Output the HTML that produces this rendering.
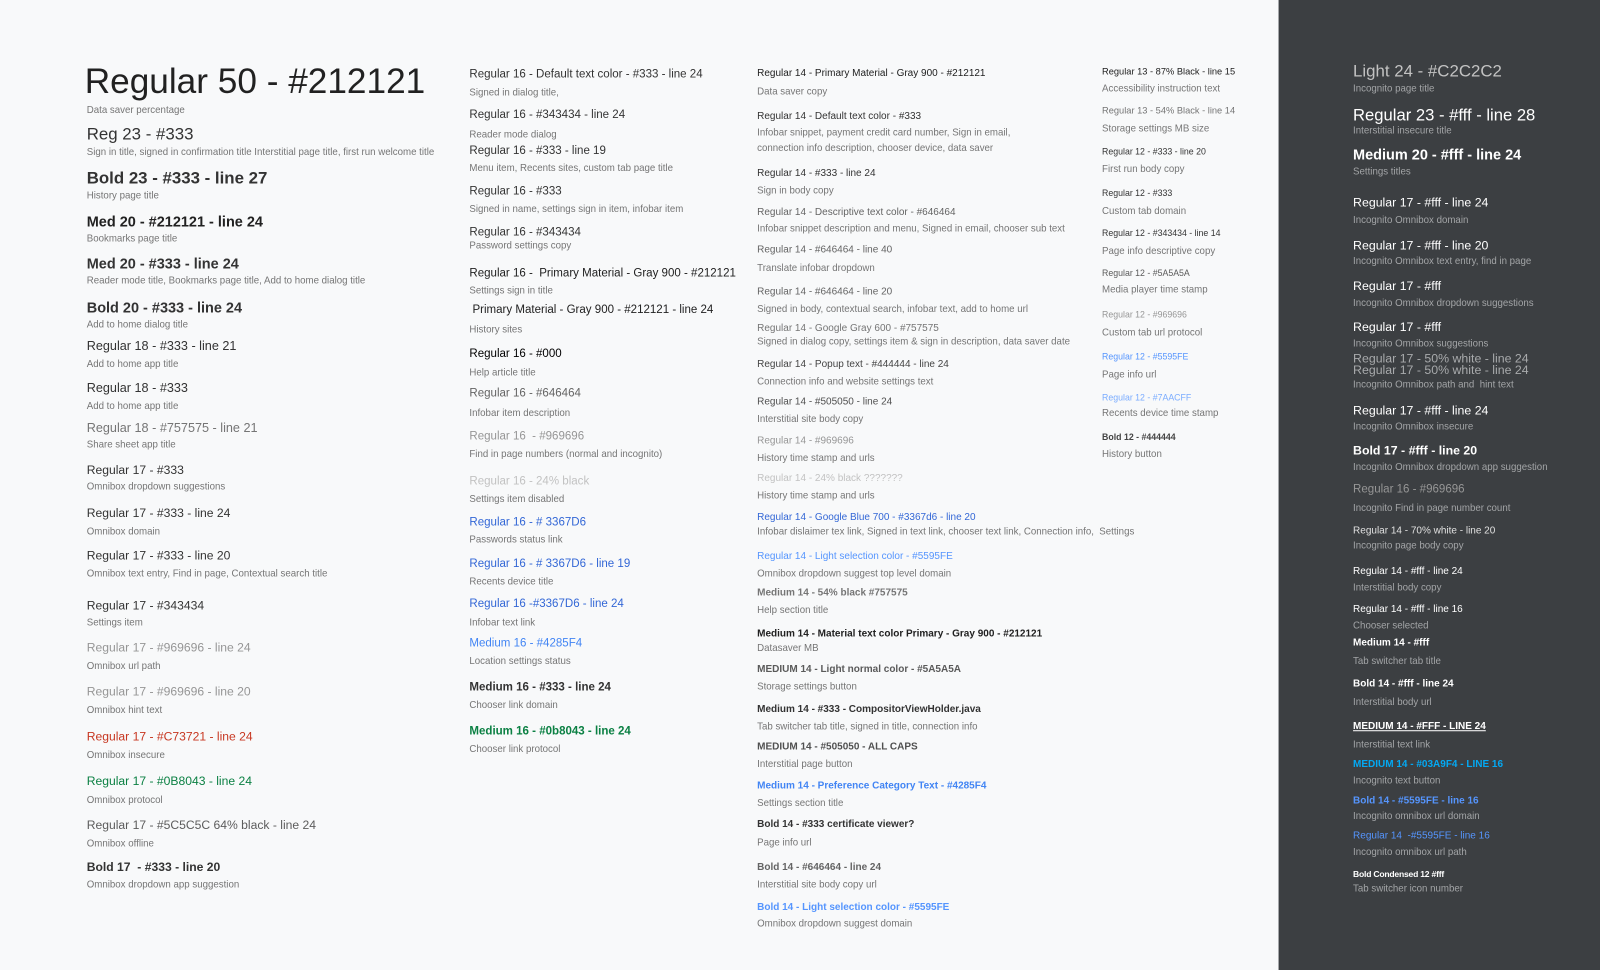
<!DOCTYPE html>
<html><head><meta charset="utf-8">
<style>
html,body{margin:0;padding:0}
body{width:1600px;height:970px;position:relative;overflow:hidden;background:#f8f9fa;font-family:"Liberation Sans",Arial,sans-serif}
#w{position:absolute;left:0;top:0;width:1568px;height:951px;transform:scale(1.0204);transform-origin:0 0}
.t{position:absolute;line-height:1;white-space:nowrap;transform:translateY(-55%);color:#333}
.c{font-size:9.5px;color:#757575}
.b{font-weight:bold}
#dark{position:absolute;left:1253px;top:0;width:340px;height:951px;background:#3c3f42}
.d{color:#fff}
.dc{font-size:9.5px;color:#a3a5a7}
.s16{font-size:11.3px}.s14{font-size:9.8px}.s13{font-size:9.1px}.s12{font-size:8.6px}.s17{font-size:11.9px}.s18{font-size:12.4px}.s20{font-size:14.2px}.s23{font-size:16.5px}
</style></head><body>
<div id="w">
<div id="dark"></div>

<!-- Column 1 -->
<div class="t" style="left:83px;top:82px;font-size:34.5px;color:#212121">Regular 50 - #212121</div>
<div class="t c" style="left:85px;top:109px">Data saver percentage</div>
<div class="t s23" style="left:85px;top:133px">Reg 23 - #333</div>
<div class="t c" style="left:85px;top:150px">Sign in title, signed in confirmation title Interstitial page title, first run welcome title</div>
<div class="t s23 b" style="left:85px;top:176px">Bold 23 - #333 - line 27</div>
<div class="t c" style="left:85px;top:193px">History page title</div>
<div class="t s20 b" style="left:85px;top:219px;color:#212121">Med 20 - #212121 - line 24</div>
<div class="t c" style="left:85px;top:235px">Bookmarks page title</div>
<div class="t s20 b" style="left:85px;top:260px">Med 20 - #333 - line 24</div>
<div class="t c" style="left:85px;top:276px">Reader mode title, Bookmarks page title, Add to home dialog title</div>
<div class="t s20 b" style="left:85px;top:303px">Bold 20 - #333 - line 24</div>
<div class="t c" style="left:85px;top:319px">Add to home dialog title</div>
<div class="t s18" style="left:85px;top:340px">Regular 18 - #333 - line 21</div>
<div class="t c" style="left:85px;top:358px">Add to home app title</div>
<div class="t s18" style="left:85px;top:381px">Regular 18 - #333</div>
<div class="t c" style="left:85px;top:399px">Add to home app title</div>
<div class="t s18" style="left:85px;top:420px;color:#757575">Regular 18 - #757575 - line 21</div>
<div class="t c" style="left:85px;top:437px">Share sheet app title</div>
<div class="t s17" style="left:85px;top:462px">Regular 17 - #333</div>
<div class="t c" style="left:85px;top:478px">Omnibox dropdown suggestions</div>
<div class="t s17" style="left:85px;top:504px">Regular 17 - #333 - line 24</div>
<div class="t c" style="left:85px;top:522px">Omnibox domain</div>
<div class="t s17" style="left:85px;top:546px">Regular 17 - #333 - line 20</div>
<div class="t c" style="left:85px;top:563px">Omnibox text entry, Find in page, Contextual search title</div>
<div class="t s17" style="left:85px;top:595px;color:#343434">Regular 17 - #343434</div>
<div class="t c" style="left:85px;top:611px">Settings item</div>
<div class="t s17" style="left:85px;top:636px;color:#969696">Regular 17 - #969696 - line 24</div>
<div class="t c" style="left:85px;top:654px">Omnibox url path</div>
<div class="t s17" style="left:85px;top:679px;color:#969696">Regular 17 - #969696 - line 20</div>
<div class="t c" style="left:85px;top:697px">Omnibox hint text</div>
<div class="t s17" style="left:85px;top:723px;color:#c73721">Regular 17 - #C73721 - line 24</div>
<div class="t c" style="left:85px;top:741px">Omnibox insecure</div>
<div class="t s17" style="left:85px;top:767px;color:#0b8043">Regular 17 - #0B8043 - line 24</div>
<div class="t c" style="left:85px;top:785px">Omnibox protocol</div>
<div class="t s17" style="left:85px;top:810px;color:#5c5c5c">Regular 17 - #5C5C5C 64% black - line 24</div>
<div class="t c" style="left:85px;top:828px">Omnibox offline</div>
<div class="t s17 b" style="left:85px;top:851px">Bold 17&nbsp; - #333 - line 20</div>
<div class="t c" style="left:85px;top:868px">Omnibox dropdown app suggestion</div>

<!-- Column 2 -->
<div class="t s16" style="left:460px;top:74px">Regular 16 - Default text color - #333 - line 24</div>
<div class="t c" style="left:460px;top:92px">Signed in dialog title,</div>
<div class="t s16" style="left:460px;top:114px;color:#343434">Regular 16 - #343434 - line 24</div>
<div class="t c" style="left:460px;top:133px">Reader mode dialog</div>
<div class="t s16" style="left:460px;top:149px">Regular 16 - #333 - line 19</div>
<div class="t c" style="left:460px;top:166px">Menu item, Recents sites, custom tab page title</div>
<div class="t s16" style="left:460px;top:189px">Regular 16 - #333</div>
<div class="t c" style="left:460px;top:206px">Signed in name, settings sign in item, infobar item</div>
<div class="t s16" style="left:460px;top:229px;color:#343434">Regular 16 - #343434</div>
<div class="t c" style="left:460px;top:242px">Password settings copy</div>
<div class="t s16" style="left:460px;top:269px;color:#212121">Regular 16 -&nbsp; Primary Material - Gray 900 - #212121</div>
<div class="t c" style="left:460px;top:286px">Settings sign in title</div>
<div class="t s16" style="left:463px;top:305px;color:#212121">Primary Material - Gray 900 - #212121 - line 24</div>
<div class="t c" style="left:460px;top:324px">History sites</div>
<div class="t s16" style="left:460px;top:348px;color:#000">Regular 16 - #000</div>
<div class="t c" style="left:460px;top:366px">Help article title</div>
<div class="t s16" style="left:460px;top:387px;color:#646464">Regular 16 - #646464</div>
<div class="t c" style="left:460px;top:406px">Infobar item description</div>
<div class="t s16" style="left:460px;top:429px;color:#969696">Regular 16&nbsp; - #969696</div>
<div class="t c" style="left:460px;top:446px">Find in page numbers (normal and incognito)</div>
<div class="t s16" style="left:460px;top:473px;color:#c2c2c2">Regular 16 - 24% black</div>
<div class="t c" style="left:460px;top:490px">Settings item disabled</div>
<div class="t s16" style="left:460px;top:513px;color:#3367d6">Regular 16 - # 3367D6</div>
<div class="t c" style="left:460px;top:530px">Passwords status link</div>
<div class="t s16" style="left:460px;top:554px;color:#3367d6">Regular 16 - # 3367D6 - line 19</div>
<div class="t c" style="left:460px;top:571px">Recents device title</div>
<div class="t s16" style="left:460px;top:593px;color:#3367d6">Regular 16 -#3367D6 - line 24</div>
<div class="t c" style="left:460px;top:611px">Infobar text link</div>
<div class="t s16" style="left:460px;top:632px;color:#4285f4">Medium 16 - #4285F4</div>
<div class="t c" style="left:460px;top:649px">Location settings status</div>
<div class="t s16 b" style="left:460px;top:675px">Medium 16 - #333 - line 24</div>
<div class="t c" style="left:460px;top:692px">Chooser link domain</div>
<div class="t s16 b" style="left:460px;top:718px;color:#0b8043">Medium 16 - #0b8043 - line 24</div>
<div class="t c" style="left:460px;top:735px">Chooser link protocol</div>

<!-- Column 3 -->
<div class="t s14" style="left:742px;top:73px;color:#212121">Regular 14 - Primary Material - Gray 900 - #212121</div>
<div class="t c" style="left:742px;top:91px">Data saver copy</div>
<div class="t s14" style="left:742px;top:115px">Regular 14 - Default text color - #333</div>
<div class="t c" style="left:742px;top:131px">Infobar snippet, payment credit card number, Sign in email,</div>
<div class="t c" style="left:742px;top:146px">connection info description, chooser device, data saver</div>
<div class="t s14" style="left:742px;top:171px">Regular 14 - #333 - line 24</div>
<div class="t c" style="left:742px;top:188px">Sign in body copy</div>
<div class="t s14" style="left:742px;top:209px;color:#646464">Regular 14 - Descriptive text color - #646464</div>
<div class="t c" style="left:742px;top:225px">Infobar snippet description and menu, Signed in email, chooser sub text</div>
<div class="t s14" style="left:742px;top:246px;color:#646464">Regular 14 - #646464 - line 40</div>
<div class="t c" style="left:742px;top:264px">Translate infobar dropdown</div>
<div class="t s14" style="left:742px;top:287px;color:#646464">Regular 14 - #646464 - line 20</div>
<div class="t c" style="left:742px;top:304px">Signed in body, contextual search, infobar text, add to home url</div>
<div class="t s14" style="left:742px;top:323px;color:#757575">Regular 14 - Google Gray 600 - #757575</div>
<div class="t c" style="left:742px;top:336px">Signed in dialog copy, settings item &amp; sign in description, data saver date</div>
<div class="t s14" style="left:742px;top:358px;color:#444">Regular 14 - Popup text - #444444 - line 24</div>
<div class="t c" style="left:742px;top:375px">Connection info and website settings text</div>
<div class="t s14" style="left:742px;top:395px;color:#505050">Regular 14 - #505050 - line 24</div>
<div class="t c" style="left:742px;top:412px">Interstitial site body copy</div>
<div class="t s14" style="left:742px;top:433px;color:#969696">Regular 14 - #969696</div>
<div class="t c" style="left:742px;top:450px">History time stamp and urls</div>
<div class="t s14" style="left:742px;top:470px;color:#c2c2c2">Regular 14 - 24% black ???????</div>
<div class="t c" style="left:742px;top:487px">History time stamp and urls</div>
<div class="t s14" style="left:742px;top:508px;color:#3367d6">Regular 14 - Google Blue 700 - #3367d6 - line 20</div>
<div class="t c" style="left:742px;top:522px">Infobar dislaimer tex link, Signed in text link, chooser text link, Connection info,&nbsp; Settings</div>
<div class="t s14" style="left:742px;top:546px;color:#5595fe">Regular 14 - Light selection color - #5595FE</div>
<div class="t c" style="left:742px;top:563px">Omnibox dropdown suggest top level domain</div>
<div class="t s14 b" style="left:742px;top:582px;color:#757575">Medium 14 - 54% black #757575</div>
<div class="t c" style="left:742px;top:599px">Help section title</div>
<div class="t s14 b" style="left:742px;top:622px;color:#212121">Medium 14 - Material text color Primary - Gray 900 - #212121</div>
<div class="t c" style="left:742px;top:636px">Datasaver MB</div>
<div class="t s14 b" style="left:742px;top:657px;color:#5a5a5a">MEDIUM 14 - Light normal color - #5A5A5A</div>
<div class="t c" style="left:742px;top:674px">Storage settings button</div>
<div class="t s14 b" style="left:742px;top:696px">Medium 14 - #333 - CompositorViewHolder.java</div>
<div class="t c" style="left:742px;top:713px">Tab switcher tab title, signed in title, connection info</div>
<div class="t s14 b" style="left:742px;top:733px;color:#505050">MEDIUM 14 - #505050 - ALL CAPS</div>
<div class="t c" style="left:742px;top:750px">Interstitial page button</div>
<div class="t s14 b" style="left:742px;top:771px;color:#4285f4">Medium 14 - Preference Category Text - #4285F4</div>
<div class="t c" style="left:742px;top:788px">Settings section title</div>
<div class="t s14 b" style="left:742px;top:809px">Bold 14 - #333 certificate viewer?</div>
<div class="t c" style="left:742px;top:827px">Page info url</div>
<div class="t s14 b" style="left:742px;top:851px;color:#646464">Bold 14 - #646464 - line 24</div>
<div class="t c" style="left:742px;top:868px">Interstitial site body copy url</div>
<div class="t s14 b" style="left:742px;top:890px;color:#5595fe">Bold 14 - Light selection color - #5595FE</div>
<div class="t c" style="left:742px;top:906px">Omnibox dropdown suggest domain</div>

<!-- Column 4 -->
<div class="t s13" style="left:1080px;top:71px;color:#212121">Regular 13 - 87% Black - line 15</div>
<div class="t c" style="left:1080px;top:88px">Accessibility instruction text</div>
<div class="t s13" style="left:1080px;top:109px;color:#757575">Regular 13 - 54% Black - line 14</div>
<div class="t c" style="left:1080px;top:127px">Storage settings MB size</div>
<div class="t s12" style="left:1080px;top:149px">Regular 12 - #333 - line 20</div>
<div class="t c" style="left:1080px;top:167px">First run body copy</div>
<div class="t s12" style="left:1080px;top:190px">Regular 12 - #333</div>
<div class="t c" style="left:1080px;top:208px">Custom tab domain</div>
<div class="t s12" style="left:1080px;top:229px;color:#343434">Regular 12 - #343434 - line 14</div>
<div class="t c" style="left:1080px;top:247px">Page info descriptive copy</div>
<div class="t s12" style="left:1080px;top:268px;color:#5a5a5a">Regular 12 - #5A5A5A</div>
<div class="t c" style="left:1080px;top:285px">Media player time stamp</div>
<div class="t s12" style="left:1080px;top:309px;color:#969696">Regular 12 - #969696</div>
<div class="t c" style="left:1080px;top:327px">Custom tab url protocol</div>
<div class="t s12" style="left:1080px;top:350px;color:#5595fe">Regular 12 - #5595FE</div>
<div class="t c" style="left:1080px;top:368px">Page info url</div>
<div class="t s12" style="left:1080px;top:390px;color:#7aacff">Regular 12 - #7AACFF</div>
<div class="t c" style="left:1080px;top:406px">Recents device time stamp</div>
<div class="t s12 b" style="left:1080px;top:429px;color:#444">Bold 12 - #444444</div>
<div class="t c" style="left:1080px;top:446px">History button</div>

<!-- Column 5 (dark) -->
<div class="t" style="left:1326px;top:71px;font-size:16.5px;color:#c2c2c2">Light 24 - #C2C2C2</div>
<div class="t dc" style="left:1326px;top:88px">Incognito page title</div>
<div class="t d" style="left:1326px;top:114px;font-size:16.3px">Regular 23 - #fff - line 28</div>
<div class="t dc" style="left:1326px;top:129px">Interstitial insecure title</div>
<div class="t d s20 b" style="left:1326px;top:153px">Medium 20 - #fff - line 24</div>
<div class="t dc" style="left:1326px;top:169px">Settings titles</div>
<div class="t d s17" style="left:1326px;top:199px;font-size:12.1px">Regular 17 - #fff - line 24</div>
<div class="t dc" style="left:1326px;top:217px">Incognito Omnibox domain</div>
<div class="t d s17" style="left:1326px;top:241px;font-size:12.1px">Regular 17 - #fff - line 20</div>
<div class="t dc" style="left:1326px;top:257px">Incognito Omnibox text entry, find in page</div>
<div class="t d s17" style="left:1326px;top:281px;font-size:12.1px">Regular 17 - #fff</div>
<div class="t dc" style="left:1326px;top:298px">Incognito Omnibox dropdown suggestions</div>
<div class="t d s17" style="left:1326px;top:321px;font-size:12.1px">Regular 17 - #fff</div>
<div class="t dc" style="left:1326px;top:338px">Incognito Omnibox suggestions</div>
<div class="t" style="left:1326px;top:352px;font-size:12.1px;color:#a8aaac">Regular 17 - 50% white - line 24</div>
<div class="t" style="left:1326px;top:363px;font-size:12.1px;color:#a8aaac">Regular 17 - 50% white - line 24</div>
<div class="t dc" style="left:1326px;top:378px">Incognito Omnibox path and&nbsp; hint text</div>
<div class="t d" style="left:1326px;top:403px;font-size:12.1px">Regular 17 - #fff - line 24</div>
<div class="t dc" style="left:1326px;top:419px">Incognito Omnibox insecure</div>
<div class="t d b" style="left:1326px;top:442px;font-size:12.1px">Bold 17 - #fff - line 20</div>
<div class="t dc" style="left:1326px;top:459px">Incognito Omnibox dropdown app suggestion</div>
<div class="t s16" style="left:1326px;top:481px;color:#969696">Regular 16 - #969696</div>
<div class="t dc" style="left:1326px;top:499px">Incognito Find in page number count</div>
<div class="t s14" style="left:1326px;top:521px;color:#e0e0e0">Regular 14 - 70% white - line 20</div>
<div class="t dc" style="left:1326px;top:536px">Incognito page body copy</div>
<div class="t d s14" style="left:1326px;top:561px">Regular 14 - #fff - line 24</div>
<div class="t dc" style="left:1326px;top:577px">Interstitial body copy</div>
<div class="t d s14" style="left:1326px;top:598px">Regular 14 - #fff - line 16</div>
<div class="t dc" style="left:1326px;top:614px">Chooser selected</div>
<div class="t d s14 b" style="left:1326px;top:631px">Medium 14 - #fff</div>
<div class="t dc" style="left:1326px;top:649px">Tab switcher tab title</div>
<div class="t d s14 b" style="left:1326px;top:671px">Bold 14 - #fff - line 24</div>
<div class="t dc" style="left:1326px;top:689px">Interstitial body url</div>
<div class="t d s14 b" style="left:1326px;top:713px;text-decoration:underline">MEDIUM 14 - #FFF - LINE 24</div>
<div class="t dc" style="left:1326px;top:731px">Interstitial text link</div>
<div class="t s14 b" style="left:1326px;top:750px;color:#03a9f4">MEDIUM 14 - #03A9F4 - LINE 16</div>
<div class="t dc" style="left:1326px;top:766px">Incognito text button</div>
<div class="t s14 b" style="left:1326px;top:786px;color:#5595fe">Bold 14 - #5595FE - line 16</div>
<div class="t dc" style="left:1326px;top:801px">Incognito omnibox url domain</div>
<div class="t s14" style="left:1326px;top:820px;color:#5595fe">Regular 14&nbsp; -#5595FE - line 16</div>
<div class="t dc" style="left:1326px;top:836px">Incognito omnibox url path</div>
<div class="t d b" style="left:1326px;top:857px;font-size:8.4px;letter-spacing:-0.2px">Bold Condensed 12 #fff</div>
<div class="t dc" style="left:1326px;top:872px">Tab switcher icon number</div>
</div>
</body></html>
